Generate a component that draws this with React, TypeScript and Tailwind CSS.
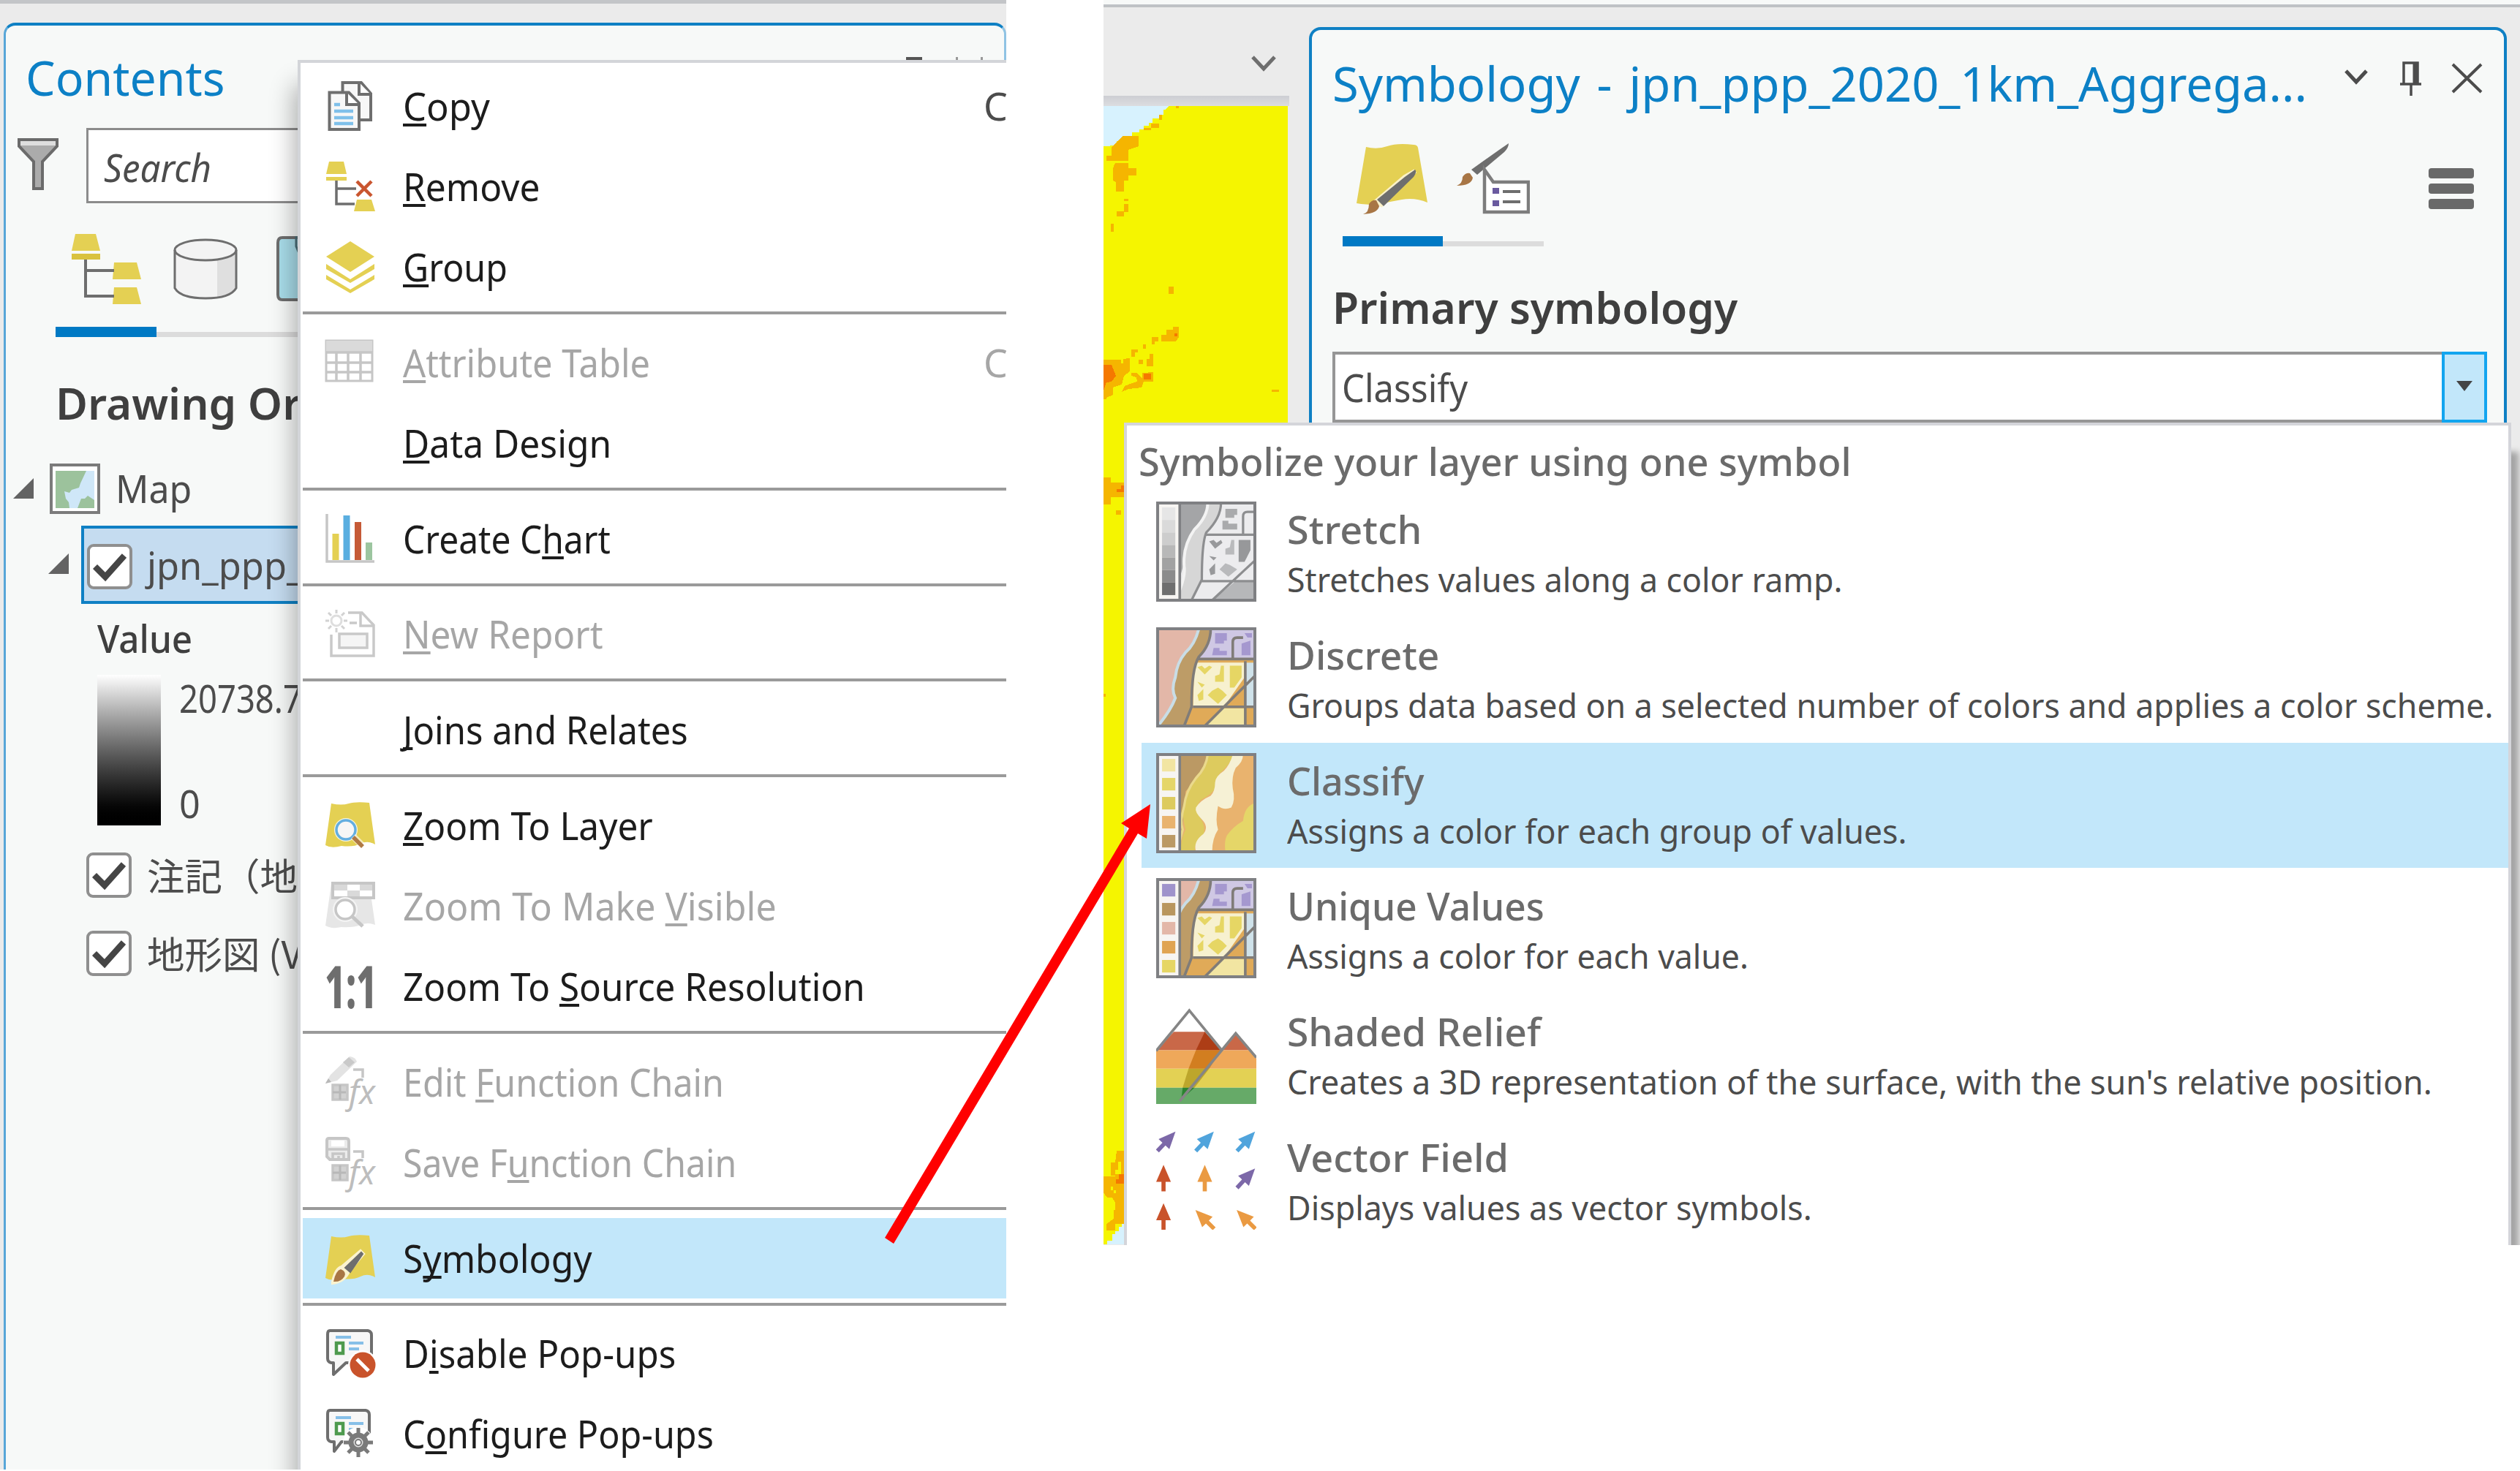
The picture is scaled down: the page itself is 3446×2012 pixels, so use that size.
import React from 'react';

/** Text squeezed or stretched horizontally so that it occupies exactly `w` pixels. */
function Fit({ w, children, className = '' }: { w: number; children: React.ReactNode; className?: string }) {
  const ref = React.useRef<HTMLSpanElement>(null);
  const [k, setK] = React.useState(1);
  React.useLayoutEffect(() => {
    if (ref.current) setK(w / ref.current.offsetWidth);
  }, [w]);
  return (
    <span ref={ref} className={`inline-block origin-left whitespace-pre ${className}`} style={{ transform: `scaleX(${k})` }}>
      {children}
    </span>
  );
}

/* ---------- menu icons (68 x 68 units) ---------- */

const Svg = ({ children, className = 'size-[68px]' }: { children: React.ReactNode; className?: string }) => (
  <svg viewBox="0 0 68 68" className={`block overflow-visible ${className}`} fill="none">
    {children}
  </svg>
);

const SHEET = 'M8 4 Q22 7 32 4 T60 3 L68 60 Q58 54 48 59 T22 62 Q8 66 0 61 Z';

const CopyIcon = () => (
  <Svg>
    <path d="M23.500 2H49L62 17V53H23.500Z" fill="#f7f7f7" stroke="#6e6e6e" strokeWidth="4" />
    <path d="M46 2V18H62" fill="#fff" stroke="#6e6e6e" strokeWidth="4" />
    <path d="M5.500 15.500H32L46 30V66H5.500Z" fill="#f7f7f7" stroke="#6e6e6e" strokeWidth="4" />
    <path d="M29 15.500V32H46" fill="#fff" stroke="#6e6e6e" strokeWidth="4" />
    <path d="M12 32h8M12 41h26M12 50h26M12 58h26" stroke="#7fc0ea" strokeWidth="4.500" />
  </Svg>
);
const RemoveIcon = () => (
  <Svg>
    <path d="M5 0H25L29 17H1ZM1 21H29V26H1Z" fill="#e4d053" />
    <path d="M15 26V58H40M15 37H42" stroke="#6e6e6e" strokeWidth="3.500" />
    <path d="M43 27L63 47M63 27L43 47" stroke="#c9552f" strokeWidth="4.500" />
    <path d="M43 52H63L68 68H39Z" fill="#e4d053" />
  </Svg>
);
const GroupIcon = () => (
  <Svg>
    <path d="M34 -1L67 20L34 41L1 20Z" fill="#e4d053" />
    <path d="M1 30L34 51L67 30V37L34 56L1 37ZM1 45L34 65L67 45V51L34 70L1 51Z" fill="#e4d053" />
  </Svg>
);
const TableIcon = () => (
  <Svg>
    <path d="M1 4H64V59H1Z" fill="#fff" stroke="#c6c6c6" strokeWidth="3" />
    <path d="M1 4H64V20H1Z" fill="#dadada" />
    <path d="M1 20H64M1 34H64M1 47H64M15 20V59M31 20V59M48 20V59" stroke="#c6c6c6" strokeWidth="3.500" />
  </Svg>
);
const ChartIcon = () => (
  <Svg>
    <path d="M2 0V65H67" stroke="#c6c6c6" strokeWidth="3.500" />
    <path d="M9.500 27h9v36h-9z" fill="#e4d053" />
    <path d="M24.500 2h9v61h-9z" fill="#5aaee0" />
    <path d="M40 11h9v52h-9z" fill="#c55a37" />
    <path d="M55 39h9v24h-9z" fill="#9cc59f" />
  </Svg>
);
const ReportIcon = () => (
  <Svg>
    <path d="M8 35V64H66V22L50 5H31" stroke="#c9c9c9" strokeWidth="3.500" />
    <path d="M48 5V23H66M33 19H43" stroke="#c9c9c9" strokeWidth="3.500" />
    <path d="M19 34H57V53H19Z" fill="#f5f5f5" stroke="#c9c9c9" strokeWidth="3.500" />
    <circle cx="15" cy="16" r="7" stroke="#dedede" strokeWidth="3" />
    <path d="M15 1v5M15 26v6M0 16h5M25 16h5M4 5l4 4M22 23l4 4M26 5l-4 4M8 23l-4 4" stroke="#d2d2d2" strokeWidth="3" />
  </Svg>
);
const ZoomLayerIcon = () => (
  <Svg>
    <path d={SHEET} fill="#e4d053" />
    <circle cx="28" cy="40" r="16" fill="#fff" opacity=".8" />
    <circle cx="28" cy="40" r="13" fill="#f6f6f6" stroke="#63aee0" strokeWidth="3.500" />
    <path d="M38 49L51 62" stroke="#fff" strokeWidth="9" opacity=".6" />
    <path d="M38 50L51 63" stroke="#b07a45" strokeWidth="5.500" />
  </Svg>
);
const ZoomVisibleIcon = () => (
  <Svg>
    <path d="M8 4H60L68 60Q58 56 48 60T22 63Q8 66 0 61Z" fill="#e6e6e6" />
    <path d="M10 3H66V23H10Z" fill="#fff" stroke="#c6c6c6" strokeWidth="4" />
    <path d="M12 5H30V13H12ZM47 5H64V13H47ZM30 13H47V21H30Z" fill="#d9d9d9" />
    <circle cx="27" cy="39" r="17" fill="#f4f4f4" />
    <circle cx="27" cy="39" r="13" fill="#fff" stroke="#c6c6c6" strokeWidth="3.500" />
    <path d="M37 49L51 62" stroke="#c6c6c6" strokeWidth="5" />
  </Svg>
);
const OneToOneIcon = () => (
  <Svg>
    <text x="-1" y="64" textLength="72" lengthAdjust="spacingAndGlyphs" fontSize="81" fontWeight="800" fill="#6e6e6e" fontFamily="Noto Sans, sans-serif">
      1:1
    </text>
  </Svg>
);
const Fx = () => (
  <text x="32" y="64" fontSize="46" fontStyle="italic" fill="#bdbdbd" fontFamily="Noto Sans, sans-serif" textLength="36" lengthAdjust="spacingAndGlyphs">
    fx
  </text>
);
const EditFnIcon = () => (
  <Svg>
    <path d="M10 38H30V58H10Z" fill="#d2d2d2" stroke="#c6c6c6" strokeWidth="3.500" />
    <path d="M38 17H51V28" stroke="#c6c6c6" strokeWidth="3.500" />
    <path d="M20 38V58M10 48H28" stroke="#b8b8b8" strokeWidth="3" />
    <path d="M7 24L33 -1Q41 0 43 6L16 32L0 36Z" fill="#e3e3e3" />
    <path d="M24 7L32 0L40 7L32 14Z" fill="#c9c9c9" />
    <path d="M0 36L4 29L8 34Z" fill="#b8b8b8" />
    <Fx />
  </Svg>
);
const SaveFnIcon = () => (
  <Svg>
    <path d="M10 38H30V58H10Z" fill="#d2d2d2" stroke="#c6c6c6" strokeWidth="3.500" />
    <path d="M38 19H51V28" stroke="#c6c6c6" strokeWidth="3.500" />
    <path d="M20 38V58M10 48H28" stroke="#b8b8b8" strokeWidth="3" />
    <path d="M5 1H28Q32 1 32 5V30H6L2 26V4Q2 1 5 1Z" fill="#ebebeb" stroke="#c6c6c6" strokeWidth="4" />
    <path d="M8 4H26V12H8Z" fill="#fff" />
    <path d="M2 16H32M10 30V22H25V30M18 25V30" stroke="#c6c6c6" strokeWidth="3.500" />
    <Fx />
  </Svg>
);
const SymbologyIcon = () => (
  <Svg>
    <path d={SHEET} fill="#e4d053" />
    <path d="M10 66Q14 48 22 46L48 24L52 28L32 52Q26 66 10 68Z" fill="#fbf3cf" stroke="#fbf3cf" strokeWidth="4" />
    <path d="M27 47L49 26L51 28L34 53Z" fill="#6e6e6e" stroke="#6e6e6e" strokeWidth="2" />
    <path d="M11 66Q14 51 21 49Q29 52 26 59Q21 67 11 66Z" fill="#a87645" />
  </Svg>
);
const Bubble = ({ tail }: { tail: string }) => (
  <>
    <path d={tail} fill="#f7f7f7" stroke="#6e6e6e" strokeWidth="4" strokeLinejoin="round" />
    <path d="M14 12H35M32 20H52M32 28H46" stroke="#86bfe8" strokeWidth="4" />
    <path d="M15 20H24V34H15Z" fill="#fff" stroke="#4e9a4e" strokeWidth="4.500" />
  </>
);
const DisableIcon = () => (
  <Svg>
    <Bubble tail="M6 3H58Q63 4 63 9V42Q60 47 50 47H28L11 63V47H8Q3 46 3 41V8Q3 3 6 3Z" />
    <circle cx="51" cy="50" r="20" fill="#fff" />
    <circle cx="51" cy="50" r="17.500" fill="#c9532b" />
    <path d="M43 42L59 58" stroke="#fff" strokeWidth="5" />
  </Svg>
);
const ConfigureIcon = () => (
  <Svg>
    <Bubble tail="M6 2H55Q60 3 60 8V38Q57 44 47 45H22L12 58V45H8Q3 44 3 39V7Q3 2 6 2Z" />
    <circle cx="45" cy="46" r="21" fill="#fff" />
    <circle cx="45" cy="46" r="10" fill="#e0e0e0" stroke="#7a7a7a" strokeWidth="7" />
    <path d="M45 26V34M45 58V66M25 46H33M57 46H65M31 32L37 38M53 54L59 60M59 32L53 38M37 54L31 60" stroke="#7a7a7a" strokeWidth="5" />
    <circle cx="45" cy="46" r="4" fill="#fff" stroke="#7a7a7a" strokeWidth="2" />
  </Svg>
);

/* ---------- context menu ---------- */

type Item = { label: [string, string, string]; w: number; icon?: React.ReactNode; off?: boolean; on?: boolean; key?: boolean };

const groups: Item[][] = [
  [
    { label: ['', 'C', 'opy'], w: 119, icon: <CopyIcon />, key: true },
    { label: ['', 'R', 'emove'], w: 187, icon: <RemoveIcon /> },
    { label: ['', 'G', 'roup'], w: 143, icon: <GroupIcon /> },
  ],
  [
    { label: ['', 'A', 'ttribute Table'], w: 338, icon: <TableIcon />, off: true, key: true },
    { label: ['', 'D', 'ata Design'], w: 285 },
  ],
  [{ label: ['Create C', 'h', 'art'], w: 284, icon: <ChartIcon /> }],
  [{ label: ['', 'N', 'ew Report'], w: 274, icon: <ReportIcon />, off: true }],
  [{ label: ['', 'J', 'oins and Relates'], w: 390 }],
  [
    { label: ['', 'Z', 'oom To Layer'], w: 342, icon: <ZoomLayerIcon /> },
    { label: ['Zoom To Make ', 'V', 'isible'], w: 511, icon: <ZoomVisibleIcon />, off: true },
    { label: ['Zoom To ', 'S', 'ource Resolution'], w: 632, icon: <OneToOneIcon /> },
  ],
  [
    { label: ['Edit ', 'F', 'unction Chain'], w: 439, icon: <EditFnIcon />, off: true },
    { label: ['Save F', 'u', 'nction Chain'], w: 456, icon: <SaveFnIcon />, off: true },
  ],
  [{ label: ['S', 'y', 'mbology'], w: 259, icon: <SymbologyIcon />, on: true }],
  [
    { label: ['D', 'i', 'sable Pop-ups'], w: 373, icon: <DisableIcon /> },
    { label: ['C', 'o', 'nfigure Pop-ups'], w: 425, icon: <ConfigureIcon /> },
  ],
];

function ContextMenu() {
  return (
    <div className="absolute top-[82px] left-[407px] h-[1960px] w-[1000px] border-4 border-[#d3d5d9] bg-white pt-1 pl-[3px] shadow-[-4px_34px_32px_0_rgba(0,0,0,0.32)]">
      {groups.map((g, gi) => (
        <React.Fragment key={gi}>
          {gi > 0 && (
            <div className="h-[20.8px] pt-[6px]">
              <div className="h-[4px] bg-[#9a9a9a]" />
            </div>
          )}
          {g.map((it) => (
            <div
              key={it.label.join('')}
              className={`flex h-[110px] items-center pl-[31px] text-[52px] leading-[112px] ${it.on ? 'bg-[#c2e7fa]' : ''} ${it.off ? 'text-[#a6a6a6]' : 'text-[#1c1c1c]'}`}
            >
              <div className="w-[106px] shrink-0">{it.icon}</div>
              <div className="w-[795px] shrink-0">
                <Fit w={it.w}>
                  {it.label[0]}
                  <span className="underline decoration-4 underline-offset-[4px] [text-decoration-skip-ink:none]">{it.label[1]}</span>
                  {it.label[2]}
                </Fit>
              </div>
              {it.key && <span className={`-ml-px ${it.off ? '' : 'text-[#4c4c4c]'}`}>C</span>}
            </div>
          ))}
        </React.Fragment>
      ))}
    </div>
  );
}

/* ---------- contents pane ---------- */

const Check = () => (
  <div className="flex size-[62px] shrink-0 items-center justify-center rounded-[9px] border-4 border-[#8f8f8f] bg-white">
    <svg viewBox="0 0 46 40" className="mt-1 h-[40px] w-[46px]">
      <path d="M3 18L17 32L43 3" fill="none" stroke="#454545" strokeWidth="8.500" />
    </svg>
  </div>
);

const Expander = ({ className }: { className: string }) => (
  <svg viewBox="0 0 28 28" className={`h-[28px] w-[28px] shrink-0 ${className}`}>
    <path d="M28 0V28H0Z" fill="#636363" />
  </svg>
);

function ContentsPane() {
  return (
    <div className="relative h-[2010px] w-[1376px] shrink-0 overflow-hidden bg-[#ebebeb]">
      <div className="h-[5px] bg-[#c3c5c8]" />
      <div className="ml-[5px] mt-[26px] h-[2010px] w-[1371px] rounded-t-[16px] border-t-[4px] border-r-[3px] border-l-[3px] border-t-[#0e80c4] border-r-[#8fc3e4] border-l-[#58a6d8] bg-[#f7f9f8]">
        <div className="h-[140px] pl-[27px] text-[65px] leading-[142px] text-[#0c80c6]">
          <Fit w={272}>Contents</Fit>
        </div>
        <div className="flex h-[103px]">
          <svg viewBox="0 0 56 72" className="mt-[14px] ml-[16px] h-[72px] w-[56px]">
            <path d="M2 2H54V11L34 32V69H22V32L2 11Z" fill="#ababab" stroke="#6b6b6b" strokeWidth="4" />
            <path d="M4 4H52V10H4Z" fill="#dedede" />
          </svg>
          <div className="ml-[38px] h-[103px] w-[500px] border-[3px] border-[#8c8c8c] bg-white pl-[21px] text-[52px] leading-[101px] text-[#4c4c4c] italic">
            <Fit w={147}>Search</Fit>
          </div>
        </div>
        <div className="mt-[42px] ml-[90px] flex h-[127px]">
          <svg viewBox="0 0 96 97" className="h-[97px] w-[96px]">
            <path d="M5 0H33L39 23H0ZM58 39H89L95 62H56ZM58 73H89L95 96H56Z" fill="#e4d053" />
            <path d="M0 27H39V35H0Z" fill="#d9c23f" />
            <path d="M19 35V85H58M19 50H58" fill="none" stroke="#6e6e6e" strokeWidth="4" />
          </svg>
          <svg viewBox="0 0 88 84" className="mt-[6px] ml-[43px] h-[84px] w-[88px]">
            <path d="M2 16V69Q10 82 44 82T86 69V16Z" fill="#f3f3f3" />
            <path d="M60 30L86 18V70Q80 78 60 81Z" fill="#dfdfdf" />
            <ellipse cx="44" cy="16" rx="42" ry="14" fill="#f3f3f3" stroke="#6e6e6e" strokeWidth="3" />
            <path d="M2 16V68Q10 82 44 82T86 68V16" fill="none" stroke="#6e6e6e" strokeWidth="3" />
          </svg>
          <svg viewBox="0 0 60 90" className="mt-[3px] ml-[53px] h-[90px] w-[60px]">
            <path d="M60 2H8Q2 2 2 9V80Q2 87 8 87H60Z" fill="#a9ddea" stroke="#6e6e6e" strokeWidth="4" />
            <path d="M27 0V14L32 26" fill="none" stroke="#4c6e78" strokeWidth="3" />
          </svg>
        </div>
        <div className="ml-[68px] flex h-[14px] items-end">
          <div className="h-[14px] w-[138px] bg-[#0079c4]" />
          <div className="h-[7px] w-[400px] bg-[#dcdcdc]" />
        </div>
        <div className="h-[172px] pl-[68px] text-[60px] leading-[181px] font-semibold text-[#3f3f3f]">
          <Fit w={336}>Drawing Or</Fit>
        </div>
        <div className="flex h-[70px] items-center">
          <Expander className="ml-[10px]" />
          <svg viewBox="0 0 69 69" className="ml-[22px] h-[69px] w-[69px]">
            <path d="M2 2H67V67H2Z" fill="#fff" stroke="#7b7b7b" strokeWidth="4" />
            <path d="M8 10H61V61H8Z" fill="#cfe7f8" />
            <path d="M8 10H50L42 27L40 33L30 36L27 40L20 38L22 48L26 53L27 61H8ZM38 61L43 48L48 48L52 44L61 50V61Z" fill="#9cc29c" />
          </svg>
          <div className="ml-[21px] text-[52px] leading-[72px] text-[#4c4c4c]">
            <Fit w={104}>Map</Fit>
          </div>
        </div>
        <div className="mt-[16px] flex h-[107px]">
          <Expander className="mt-[38px] ml-[58px]" />
          <div className="ml-[17px] flex h-[107px] w-[500px] items-center border-4 border-[#0f80c4] bg-[#c5dcf0] pl-[4px]">
            <div className="mt-[4px]">
              <Check />
            </div>
            <div className="ml-[20px] text-[52px] leading-[112px] text-[#4c4c4c]">
              <Fit w={242}>jpn_ppp_2</Fit>
            </div>
          </div>
        </div>
        <div className="h-[97px] pl-[125px] text-[52px] leading-[93px] font-medium text-[#3f3f3f]">
          <Fit w={130}>Value</Fit>
        </div>
        <div className="flex h-[206px] pl-[125px]">
          <div className="w-[87px] bg-linear-to-b from-white to-black" />
          <div className="ml-[25px] flex flex-col justify-between text-[52px] text-[#4c4c4c]">
            <div className="leading-[63px]">
              <Fit w={220}>20738.719</Fit>
            </div>
            <div className="h-[51px] leading-[42px]">
              <Fit w={29}>0</Fit>
            </div>
          </div>
        </div>
        <div className="mt-[37px] flex flex-col gap-[45px] pl-[110px] leading-[60px] text-[#4c4c4c]">
          {['注記（地', '地形図 (V'].map((t) => (
            <div key={t} className="flex h-[62px] items-center whitespace-nowrap">
              <Check />
              <span className="-mt-[2px] ml-[21px] font-['Noto_Sans_CJK_JP','Noto_Sans',sans-serif] text-[51.500px]">{t}</span>
            </div>
          ))}
        </div>
      </div>
      {/* pane buttons that peek out above the open menu */}
      <div className="absolute top-[78px] left-[1239px] flex h-1">
        <div className="w-[22px] bg-[#555]" />
        <div className="ml-[46px] w-[3px] bg-[#999]" />
        <div className="ml-[31px] w-[3px] bg-[#999]" />
      </div>
      <ContextMenu />
    </div>
  );
}

/* ---------- map strip ---------- */

const MapStrip = () => (
  <svg viewBox="1509 145 252 1557" className="block h-[1557px] w-[252px]" shapeRendering="crispEdges">
    <path d="M1509 145H1761V1702H1509Z" fill="#f5f500" />
    <path d="M1509 145H1598L1594 150H1591V157H1585V162H1576V168H1571V172H1564V177H1558V181H1548V187H1536V193H1527V199H1518V200H1509Z" fill="#d7f2fe" />
    <g fill="#f5b500">
      <path d="M1535 186H1557V200L1543 205V220H1513V213H1520V201Z" />
      <path d="M1525 223H1543V230H1554V240H1543V247H1537V262H1526V249L1522 247V230Z" />
      <path d="M1585 157h3.500v7h-3.500zM1573.500 169h11v6h-11zM1564 175h10v3h-10zM1608 145h4v3h-4zM1537 271.600h6v3h-6zM1537 279h6v11h-6zM1526.500 288.600h10v7h-10zM1519 305.600h3.500v11h-3.500zM1598 392h7v10h-7z" />
      <path d="M1604 447H1612V461L1608 467H1588V458H1595V451H1604ZM1574.500 461h9v6h-5v4h-4zM1563 471h4v6h-4zM1547 478h9v4h-4v6h-5zM1557 491.500h6v6h-6zM1572 484h5v17h-9v-10h4z" />
      <path d="M1509 491.500H1533V497H1536V491H1540V490H1545V508L1537 514L1534 526L1522 530V540L1513 544V546H1509Z" />
      <path d="M1547 510H1554L1562 518V510L1577 509V522H1564L1561 530L1543 532L1534 536L1538 528L1548 524L1555 522L1554 516L1547 514ZM1739 532.600h10v3.500h-10z" />
      <path d="M1509 653H1519V660H1538V680H1519V690H1509ZM1525.500 698h7v6h-7zM1509 949h3v4h-3z" />
      <path d="M1527 1574H1538V1674H1525V1683H1513V1674L1523 1667V1655H1525V1645L1521 1638H1514L1509 1631V1609H1525V1608H1519V1590H1525Z" />
    </g>
    <g fill="#f57800">
      <path d="M1509 499H1520L1526 514L1520 522L1513 523L1509 534ZM1564 511h10v8h-10zM1606 456h4v4h-4zM1533 664h5v9h-11v-4h6zM1526 1613h4v-7h8v13h-12z" />
    </g>
    <path d="M1529 1589h4v17h-8v-6h4zM1519 1623h3v5h4v4h-3v-4h-4zM1519 1649h3v10h-3z" fill="#f5f500" />
    <path d="M1514 1702V1697H1521V1688H1525V1684H1530V1678H1534V1674H1538V1702Z" fill="#d7f2fe" />
  </svg>
);

/* ---------- symbology pane ---------- */

const SymTab = () => (
  <svg viewBox="0 0 98 98" className="h-[98px] w-[98px]">
    <path d="M13 5Q28 9 42 4T78 2Q83 2 84 6L97 81Q80 74 62 77T28 84Q12 84 0 82Z" fill="#e4d053" />
    <path d="M80 38L34 84L26 80L66 46Z" fill="#faf1c8" stroke="#faf1c8" strokeWidth="6" />
    <path d="M80 36Q83 39 78 46L37 86L28 77L66 46Z" fill="#6e6e6e" />
    <path d="M9 97Q17 95 17 83Q21 77 27 78L31 86Q29 96 9 97Z" fill="#a87645" />
  </svg>
);
const VaryTab = () => (
  <svg viewBox="0 0 100 98" className="h-[98px] w-[100px]">
    <path d="M71 0Q71 6 65 12L28 43L20 36L58 9Z" fill="#6e6e6e" />
    <path d="M0 58Q8 55 8 46Q12 40 18 41L22 47Q20 58 0 58Z" fill="#a87645" />
    <path d="M38 36L50 53H98V94H38Z" fill="#fff" stroke="#7d7d7d" strokeWidth="4.500" />
    <path d="M49 61h9v8h-9zM49 78h9v8h-9z" fill="#6a5a9f" />
    <path d="M63 66H87M63 80H87" stroke="#6e6e6e" strokeWidth="4" />
  </svg>
);

/* symbolizer thumbnails, 68 x 68 units */
const Frame = () => <path d="M1 1H67V67H1Z" fill="none" stroke="#7f8083" strokeWidth="2" />;
const Swatches = ({ colors }: { colors: string[] }) => (
  <>
    <path d="M1 1H16V67H1Z" fill="#f7f5f2" />
    {colors.map((c, i) => (
      <rect key={i} x="4" y={4 + i * 12.900} width="9" height="8.500" fill={c} />
    ))}
    <path d="M16 1V67" stroke="#7f8083" strokeWidth="1.800" />
  </>
);
const Blocks = ({ a, b, c }: { a: string; b: string; c: string }) => (
  <>
    <path d="M40 4H48V9H46V11H40ZM39 14H43V16H48V19H38ZM60 4H65V7H62ZM58 11L64 9V19H58Z" fill={a} />
    <path d="M28 27L31 26L33 28L36 26L38 27L33 32ZM28 37L33 39L31 41ZM32 42V49L29 50L28 46Z" fill={b} />
    <path d="M44 26H46V37H40V33L43 32ZM50 26H58V34L53 41H50ZM35 46L38 43L42 41L45 43L48 46L42 52Z" fill={c} />
  </>
);
const City = () => (
  <>
    <path d="M1 1H67V67H1Z" fill="#e0aa58" />
    <path d="M1 1H32Q28 12 20 18Q12 30 12 44Q14 54 4 67H1Z" fill="#e3b7a8" />
    <path d="M37 1H67V21H28Z" fill="#cfc8e4" />
    <path d="M26 24H60V34L46 54H25Z" fill="#f7f1cf" />
    <path d="M61 24H67V54H61Z" fill="#cfe2ea" />
    <path d="M44 55H60V67H33Z" fill="#f2e5a2" />
    <path d="M29 1Q26 12 20 17Q14 24 13 34Q10 42 13 48Q10 56 2 66L19 66L25 54Q24 30 29 21Q37 12 37 1Z" fill="#bd9c67" />
    <path d="M29 1Q26 12 20 17Q14 24 13 34Q10 42 13 48Q10 56 2 66" fill="none" stroke="#c9dde6" strokeWidth="2" />
    <Blocks a="#a598cf" b="#e6d664" c="#e6d664" />
    <path d="M37 1Q37 12 29 20Q24 28 24 54L19 67M28 21.500H67M25 54H67M60.500 23V67M67 33L33 67M52 21V10Q52 7 55 7H59" fill="none" stroke="#807c78" strokeWidth="1.800" />
  </>
);

const Thumb = ({ children }: { children: React.ReactNode }) => (
  <svg viewBox="0 0 68 68" className="block size-[137px] shrink-0">
    {children}
  </svg>
);

const StretchThumb = () => (
  <Thumb>
    <path d="M1 1H67V67H1Z" fill="#ececee" />
    <path d="M16 1H37L34 12L24 24L20 38L16 52Z" fill="#a4a5a7" />
    <path d="M35 1H44Q44 10 34 20Q30 26 31 54L24 67H16L19 40Q20 28 28 18Q35 10 35 1Z" fill="#d6d6d6" />
    <path d="M35 1Q35 10 26 19Q18 30 19 44Q20 50 16 60" fill="none" stroke="#f3f3f3" strokeWidth="2" />
    <path d="M54 54H67V67H38Z" fill="#b6b7b9" />
    <path d="M47 5H55V9H53V11H47ZM45 13H49V15H55V19H45Z" fill="#a9aaac" />
    <path d="M36 27L39 26L41 28L44 26L45 28L40 32ZM36 37L41 38L39 40ZM40 42V49L37 50L36 46Z" fill="#98999b" />
    <path d="M51 26H53V36H47V32L50 31ZM43 46L47 42L50 43L55 46L49 51Z" fill="#b9babc" />
    <path d="M56 26H64V33L60 41H56Z" fill="#97989a" />
    <path d="M44 1Q44 11 34 21Q31 28 31 53L24 67M33 22.500H67M31 54H67M67 40L38 67M59 22V10Q59 7 62 7H66" fill="none" stroke="#8d8e90" strokeWidth="1.600" />
    <Swatches colors={[]} />
    {['#e6e6e6', '#dadada', '#cdcdcd', '#b8b8b8', '#a2a2a2', '#8b8b8b', '#6f6f6f'].map((c, i) => (
      <rect key={c} x="4" y={4 + i * 8.500} width="9" height="8.500" fill={c} />
    ))}
    <Frame />
  </Thumb>
);
const DiscreteThumb = () => (
  <Thumb>
    <City />
    <Frame />
  </Thumb>
);
const ClassifyThumb = () => (
  <Thumb>
    <path d="M1 1H67V67H1Z" fill="#e9b36e" />
    <path d="M16 1H36L30 14L20 26L18 50L16 60Z" fill="#bb9964" />
    <path d="M35 1H53Q50 8 43 14Q40 18 40 24Q38 28 30 32Q26 38 30 44Q34 50 32 56Q26 60 26 67H17Q16 60 20 52Q18 44 18 38Q22 24 27 18Q34 12 35 1Z" fill="#ddcb5e" />
    <path d="M52 1H59Q59 6 54 10Q51 16 52 24Q54 32 51 37Q46 39 42 36Q40 46 42 52Q38 58 38 67H27Q25 60 32 55Q36 50 31 45Q26 40 27 37Q30 32 37 29Q40 26 40 20Q40 16 46 12Q50 8 52 1Z" fill="#f6f1d5" />
    <path d="M67 34Q60 36 59 46Q52 50 48 56Q46 60 47 67H67Z" fill="#e5d668" />
    <path d="M35 1Q34 10 27 17Q20 26 19 36Q16 46 18 52L16 60" fill="none" stroke="#ead98c" strokeWidth="1.600" />
    <Swatches colors={['#f2e5a2', '#e5d668', '#ddcb5e', '#e9b36e', '#bb9964']} />
    <Frame />
  </Thumb>
);
const UniqueThumb = () => (
  <Thumb>
    <City />
    <Swatches colors={['#9f93cb', '#b9965e', '#e3b7a8', '#e0a452', '#e6d664']} />
    <Frame />
  </Thumb>
);
const ReliefThumb = () => (
  <Thumb>
    <path d="M12 18L22.500 5L33 18L44 31L54 19L68 35V67H0V31Z" fill="#fff" />
    <path d="M12 19H33L44 31.500H0ZM45 31.500L54 20L63 31.500Z" fill="#c96848" />
    <path d="M0 31.500H64L68 37V44H0Z" fill="#efa85a" />
    <path d="M0 44H68V57H0Z" fill="#e3d154" />
    <path d="M0 57H68V70H0Z" fill="#66aa68" />
    <path d="M33 19L44 31.500H27Z" fill="#ad3d16" />
    <path d="M27 31.500H44L36 44H22Z" fill="#d27e20" />
    <path d="M22 44H36L26 57H18Z" fill="#bda62c" />
    <path d="M18 57H26L17 65Z" fill="#2b8430" />
    <path d="M0 32L22.500 4.500L44.500 31.500M16 66L54 20L68 36.500" fill="none" stroke="#858585" strokeWidth="1.800" />
  </Thumb>
);
const Arrow = ({ x, y, r, c }: { x: number; y: number; r: number; c: string }) => (
  <path transform={`translate(${x} ${y}) rotate(${r})`} d="M0 -9L5 2.500H1.400V9H-1.400V2.500H-5Z" fill={c} />
);
const VectorThumb = () => (
  <Thumb>
    <Arrow x={7} y={8} r={43} c="#7c68a8" />
    <Arrow x={33} y={8} r={43} c="#50a4dc" />
    <Arrow x={61} y={8} r={43} c="#50a4dc" />
    <Arrow x={5} y={33} r={0} c="#c9532b" />
    <Arrow x={33} y={33} r={0} c="#ea9a42" />
    <Arrow x={61} y={33} r={43} c="#7c68a8" />
    <Arrow x={5} y={59} r={0} c="#c9532b" />
    <Arrow x={33} y={61} r={-45} c="#ea9a42" />
    <Arrow x={61} y={61} r={-45} c="#ea9a42" />
  </Thumb>
);

const options: { name: string; nw: number; desc: string; dw: number; icon: React.ReactNode; on?: boolean }[] = [
  { name: 'Stretch', nw: 184, desc: 'Stretches values along a color ramp.', dw: 759, icon: <StretchThumb /> },
  { name: 'Discrete', nw: 208, desc: 'Groups data based on a selected number of colors and applies a color scheme.', dw: 1649, icon: <DiscreteThumb /> },
  { name: 'Classify', nw: 187, desc: 'Assigns a color for each group of values.', dw: 847, icon: <ClassifyThumb />, on: true },
  { name: 'Unique Values', nw: 352, desc: 'Assigns a color for each value.', dw: 631, icon: <UniqueThumb /> },
  { name: 'Shaded Relief', nw: 347, desc: "Creates a 3D representation of the surface, with the sun's relative position.", dw: 1566, icon: <ReliefThumb /> },
  { name: 'Vector Field', nw: 303, desc: 'Displays values as vector symbols.', dw: 718, icon: <VectorThumb /> },
];

function SymbologyPopup() {
  return (
    <div className="absolute top-[578px] left-[28px] h-[1200px] w-[1897px] border-4 border-[#d4d5da] bg-white pl-[20px] shadow-[10px_40px_8px_0_rgba(0,0,0,0.3)]">
      <div className="h-[90px] text-[52px] leading-[97px] font-medium text-[#6b6b6b]">
        <Fit w={975} className="-ml-[4px]">
          Symbolize your layer using one symbol
        </Fit>
      </div>
      {options.map((o) => (
        <div key={o.name} className={`flex h-[171.800px] pt-[14px] pl-[20px] ${o.on ? 'bg-[#c2e7fa]' : ''}`}>
          {o.icon}
          <div className="ml-[42px]">
            <div className="h-[73px] text-[52px] leading-[76px] font-medium text-[#6b6b6b]">
              <Fit w={o.nw}>{o.name}</Fit>
            </div>
            <div className="text-[46px] leading-[67px] text-[#4c4c4c]">
              <Fit w={o.dw}>{o.desc}</Fit>
            </div>
          </div>
        </div>
      ))}
    </div>
  );
}

function SymbologyPane() {
  return (
    <div className="relative ml-[133px] h-[1703px] w-[1937px] shrink-0 overflow-hidden bg-[#ebebeb]">
      <div className="h-[10px] border-b-4 border-[#bfc2c5] bg-[#f7f9f8]" />
      <div className="flex">
        <div className="w-[254px]">
          <div className="flex h-[121px] justify-end pt-[66px] pr-[18px]">
            <svg viewBox="0 0 34 22" className="h-[22px] w-[34px]">
              <path d="M2 2L17 18L32 2" fill="none" stroke="#6e6e6e" strokeWidth="5" />
            </svg>
          </div>
          <div className="h-[14px] bg-linear-to-b from-[#cdced3] to-[#dcdde0]" />
          <MapStrip />
        </div>
        <div className="mt-[27px] ml-[27px] h-[1700px] w-[1638px] rounded-t-[16px] border-x-4 border-t-4 border-[#0f80c4] bg-[#f7f9f8]">
          <div className="flex h-[147px] items-center pl-[28px] text-[65px] text-[#0c80c6]">
            <div className="w-[1384px] leading-[145px] [word-spacing:6px]">
              <Fit w={1333}>Symbology - jpn_ppp_2020_1km_Aggrega...</Fit>
            </div>
            <svg viewBox="0 0 190 48" className="-mt-[13px] h-[48px] w-[190px]" fill="none" stroke="#4c4c4c">
              <path d="M2 13L16 28L30 13" strokeWidth="5" />
              <path d="M81 2H100V31H81ZM76 31H105M91 31V47" strokeWidth="3.500" />
              <path d="M97 2V31" strokeWidth="7" />
              <path d="M148 4L187 42M187 4L148 42" strokeWidth="4" />
            </svg>
          </div>
          <div className="flex h-[135px] pt-[8px] pl-[61px]">
            <SymTab />
            <div className="ml-[39px]">
              <VaryTab />
            </div>
            <div className="mt-[34px] ml-[1229px] flex h-[56px] w-[62px] flex-col justify-between">
              <div className="h-[14px] rounded-[4px] bg-[#696969]" />
              <div className="h-[14px] rounded-[4px] bg-[#696969]" />
              <div className="h-[14px] rounded-[4px] bg-[#696969]" />
            </div>
          </div>
          <div className="flex h-[14px] items-end pl-[42px]">
            <div className="h-[14px] w-[137px] bg-[#0079c4]" />
            <div className="h-[7px] w-[138px] bg-[#dcdcdc]" />
          </div>
          <div className="h-[144px] pl-[28px] text-[60px] leading-[166px] font-semibold text-[#3f3f3f]">
            <Fit w={554}>Primary symbology</Fit>
          </div>
          <div className="ml-[28px] flex h-[97px] w-[1579px]">
            <div className="grow border-4 border-r-0 border-[#969696] bg-white pl-[9px] text-[52px] leading-[89px] text-[#4c4c4c]">
              <Fit w={172}>Classify</Fit>
            </div>
            <div className="flex w-[62px] items-center justify-center border-4 border-[#12a5ef] bg-[#c2e7fa]">
              <svg viewBox="0 0 22 14" className="-mt-1 h-[14px] w-[22px]">
                <path d="M0 0H22L11 14Z" fill="#454545" />
              </svg>
            </div>
          </div>
        </div>
      </div>
      <SymbologyPopup />
    </div>
  );
}

export default function App() {
  return (
    <div className="relative flex h-[2012px] w-[3446px] items-start overflow-hidden bg-white font-['Noto_Sans','Noto_Sans_CJK_JP',sans-serif]">
      <ContentsPane />
      <SymbologyPane />
      {/* pointer from the menu entry to the chosen symbolizer */}
      <svg viewBox="0 0 364 602" className="absolute top-[1100px] left-[1209px] h-[602px] w-[364px]">
        <path d="M364 0L359 47L347 40L13 601L1 593L335 33L324 26Z" fill="#ff0000" />
      </svg>
    </div>
  );
}
